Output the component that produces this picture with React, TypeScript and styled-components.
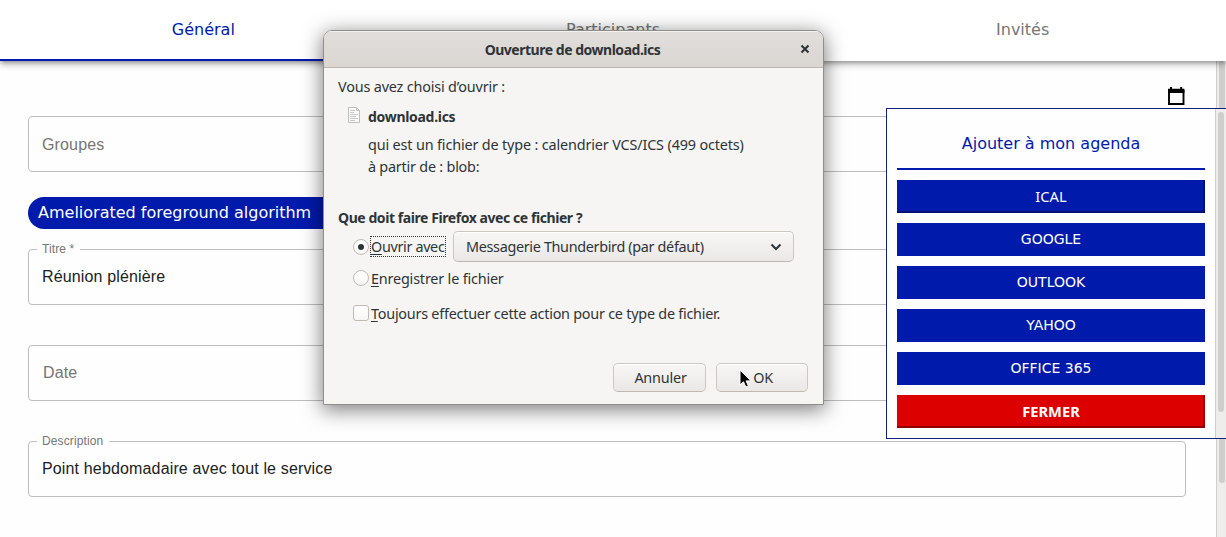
import React from "react";
import styled, { createGlobalStyle, css } from "styled-components";

const Global = createGlobalStyle`
  * { box-sizing: border-box; }
  html, body { margin: 0; padding: 0; background: #fff; overflow: hidden; }
`;

const BLUE = "#001aab";

const Page = styled.div`
  position: relative;
  width: 1226px;
  height: 537px;
  overflow: hidden;
  display: flex;
  flex-direction: column;
  background: #fefefe;
  font-family: "DejaVu Sans", sans-serif;
`;

const Tabs = styled.nav`
  position: relative;
  z-index: 1;
  flex: none;
  display: grid;
  grid-template-columns: repeat(3, 1fr);
  height: 61px;
  background: #fff;
  box-shadow: 0 2px 4px -1px rgba(0, 0, 0, 0.3), 0 4px 6px rgba(0, 0, 0, 0.16),
    0 1px 10px rgba(0, 0, 0, 0.12);
`;

const Tab = styled.div<{ $active?: boolean }>`
  display: flex;
  align-items: center;
  justify-content: center;
  padding: ${(p) => (p.$active ? "0 2px 0 0" : "0 0 2px")};
  font-size: 16px;
  color: ${(p) => (p.$active ? BLUE : "#757575")};
  border-bottom: ${(p) => (p.$active ? `2px solid ${BLUE}` : "none")};

  &:last-child {
    padding-left: 2px;
  }
`;

const Content = styled.div`
  flex: 1;
  display: flex;
  min-height: 0;
`;

const Form = styled.main`
  flex: 1;
  display: flex;
  flex-direction: column;
  align-items: stretch;
  padding: 24px 30px 0 28px;
`;

const CalendarRow = styled.div`
  display: flex;
  justify-content: flex-end;
  height: 31px;
`;

const Field = styled.div<{ $mb: number; $indent?: number; $drop?: number }>`
  position: relative;
  flex: none;
  display: flex;
  align-items: center;
  height: 56px;
  margin-bottom: ${(p) => p.$mb}px;
  padding: ${(p) => p.$drop ?? 0}px ${(p) => p.$indent ?? 13}px 0;
  border: 1px solid #bdbdbd;
  border-radius: 4px;
  font: 16px "Liberation Sans", Arial, sans-serif;
  letter-spacing: 0.15px;
  color: #212121;
`;

const Placeholder = styled.span`
  color: #757575;
`;

const Label = styled.label`
  position: absolute;
  left: 8px;
  top: -8px;
  padding: 0 6px 0 5px;
  background: #fefefe;
  color: #757575;
  font-size: 12px;
  letter-spacing: 0.11px;
  line-height: 14px;
`;

const Chip = styled.div`
  flex: none;
  align-self: flex-start;
  display: flex;
  align-items: center;
  width: 340px;
  height: 32px;
  margin-bottom: 20px;
  padding: 0 10px 1px;
  border-radius: 16px;
  background: ${BLUE};
  color: #fff;
  font-size: 16px;
`;

const PageScroll = styled.div`
  flex: none;
  width: 10px;
  padding: 0 0 54px 2px;
  background: #eeedeb;
  border-left: 1px solid #d0cfce;
`;

const ScrollThumb = styled.div<{ $h: string; $w: number }>`
  height: ${(p) => p.$h};
  width: ${(p) => p.$w}px;
  border-radius: 3px;
  background: #cecece;
`;

const Agenda = styled.aside`
  position: absolute;
  z-index: 2;
  left: 886px;
  top: 108px;
  width: 342px;
  height: 331px;
  display: flex;
  border: 1px solid #14207a;
  background: #fefefe;
`;

const AgendaBody = styled.div`
  flex: 1;
  display: flex;
  flex-direction: column;
  gap: 10px;
  padding: 10px 10px 0;
`;

const AgendaTitle = styled.h2`
  margin: 0;
  height: 51px;
  display: flex;
  align-items: center;
  justify-content: center;
  padding-bottom: 1px;
  border-bottom: 2px solid ${BLUE};
  color: ${BLUE};
  font-size: 16px;
  font-weight: 400;
`;

const AgendaButton = styled.button<{ $danger?: boolean; $raised?: boolean }>`
  height: 33px;
  padding: 0 0 2px;
  border: 0;
  border-radius: 0;
  background: ${(p) => (p.$danger ? "#dc0000" : BLUE)};
  color: #fff;
  font: 14px "DejaVu Sans", sans-serif;
  ${(p) =>
    p.$raised &&
    css`
      font-size: 14.67px;
      font-family: "Noto Sans", sans-serif;
      box-shadow: inset -2px -2px 0 ${p.$danger ? "#900000" : "#001173"};
    `}
  ${(p) =>
    p.$danger &&
    css`
      font-weight: 700;
    `}
`;

const AgendaScroll = styled.div`
  flex: none;
  width: 12px;
  padding: 3px 0 0 2px;
  border-left: 1px solid #d0cfce;
  background: #eeedeb;
`;

const Dialog = styled.section`
  position: absolute;
  z-index: 3;
  left: 323px;
  top: 30px;
  width: 501px;
  height: 375px;
  display: flex;
  flex-direction: column;
  border: 1px solid #8e8e8b;
  border-radius: 9px 9px 0 0;
  overflow: hidden;
  background: #f6f5f4;
  color: #2e3436;
  font: 14.4px "Noto Sans", sans-serif;
`;

const DialogShadow = styled.div`
  position: absolute;
  z-index: 3;
  left: 323px;
  top: 30px;
  width: 501px;
  height: 375px;
  border-radius: 9px 9px 0 0;
  box-shadow: 0 4px 20px 1px rgba(0, 0, 0, 0.5);
`;

const TitleBar = styled.header`
  flex: none;
  display: grid;
  grid-template-columns: 35px 1fr 37px;
  align-items: center;
  justify-items: center;
  height: 37px;
  border-bottom: 1px solid #bfb8b1;
  background: linear-gradient(#e1dedb, #dad6d2);
  box-shadow: inset 0 1px #f4f2f1;
`;

const DialogBody = styled.div`
  flex: 1;
  display: flex;
  flex-direction: column;
  padding: 7px 15px 12px 14px;
`;

const Line = styled.div<{ $h: number; $ml?: number; $mt?: number }>`
  flex: none;
  display: flex;
  align-items: center;
  height: ${(p) => p.$h}px;
  margin-left: ${(p) => p.$ml ?? 0}px;
  margin-top: ${(p) => p.$mt ?? 0}px;
`;

const Words = styled.span<{ $bold?: boolean; $track?: number }>`
  white-space: pre;
  font-size: ${(p) => (p.$bold ? 14 : 14.4)}px;
  font-weight: ${(p) => (p.$bold ? 700 : 400)};
  letter-spacing: ${(p) => p.$track ?? 0}px;
`;

const FileName = styled(Words)`
  margin-left: 7px;
`;

const Key = styled.span`
  text-decoration: underline;
  text-decoration-thickness: 1px;
  text-underline-offset: 2px;
`;

const Focus = styled.span`
  display: flex;
  align-items: center;
  height: 21px;
  width: 76px;
  margin: 0 7px 0 -1px;
  border: 1px dotted #2e3436;
`;

const Mark = styled.span<{ $round?: boolean }>`
  flex: none;
  display: flex;
  align-items: center;
  justify-content: center;
  width: 16px;
  height: 16px;
  margin-right: 2px;
  border: 1px solid #c0bab4;
  border-radius: ${(p) => (p.$round ? "50%" : "3px")};
  background: linear-gradient(#fff, #f7f6f5);
`;

const Dot = styled.span`
  width: 6px;
  height: 6px;
  border-radius: 50%;
  background: #2e3436;
`;

const control = css`
  display: flex;
  align-items: center;
  border: 1px solid #cdc7c2;
  border-bottom-color: #bfb8b1;
  border-radius: 5px;
  background: linear-gradient(#f8f7f6, #eae8e6);
  box-shadow: inset 0 1px #fff;
`;

const Select = styled.div`
  ${control}
  justify-content: space-between;
  width: 341px;
  height: 31px;
  padding: 0 11px 0 12px;
`;

const Actions = styled.footer`
  display: flex;
  justify-content: flex-end;
  gap: 10px;
  margin-top: auto;
`;

const Action = styled.div<{ $w: number }>`
  ${control}
  justify-content: center;
  width: ${(p) => p.$w}px;
  height: 29px;
  padding-left: 2px;
`;

const Pointer = styled.svg`
  position: absolute;
  z-index: 4;
  left: 737px;
  top: 367px;
`;

const CalendarIcon = () => (
  <svg width="20" height="22" viewBox="0 0 20 22">
    <path d="M3 6h14.500v13H3z" fill="#fff" stroke="#000" strokeWidth="1.900" />
    <path d="M2 3.800h16.400v4.200H2zM4 2h2v3H4zM14.200 2h2v3h-2z" fill="#000" />
  </svg>
);

const FileIcon = () => (
  <svg width="14" height="20" viewBox="0 0 14 20">
    <path d="M1.5 1.500h8l3 3v12h-11z" fill="#fafafa" stroke="#bfc0bd" />
    <path d="M9.5 1.500v3h3" fill="none" stroke="#bfc0bd" />
    <path d="M3 4.500h5M3 6.500h4M3 8.500h8M3 10.500h6M3 12.500h8M3 14.500h5" stroke="#c9cac8" />
  </svg>
);

export default function App() {
  return (
    <Page>
      <Global />
      <Tabs>
        <Tab $active>Général</Tab>
        <Tab>Participants</Tab>
        <Tab>Invités</Tab>
      </Tabs>
      <Content>
        <Form>
          <CalendarRow>
            <CalendarIcon />
          </CalendarRow>
          <Field $mb={25} $drop={2}>
            <Placeholder>Groupes</Placeholder>
          </Field>
          <Chip>Ameliorated foreground algorithm</Chip>
          <Field $mb={40}>
            <Label>Titre *</Label>
            Réunion plénière
          </Field>
          <Field $mb={40} $indent={14}>
            <Placeholder>Date</Placeholder>
          </Field>
          <Field $mb={0}>
            <Label>Description</Label>
            Point hebdomadaire avec tout le service
          </Field>
        </Form>
        <PageScroll>
          <ScrollThumb $h="100%" $w={6} />
        </PageScroll>
      </Content>

      <Agenda>
        <AgendaBody>
          <AgendaTitle>Ajouter à mon agenda</AgendaTitle>
          <AgendaButton $raised>ICAL</AgendaButton>
          <AgendaButton>GOOGLE</AgendaButton>
          <AgendaButton>OUTLOOK</AgendaButton>
          <AgendaButton>YAHOO</AgendaButton>
          <AgendaButton>OFFICE 365</AgendaButton>
          <AgendaButton $raised $danger>FERMER</AgendaButton>
        </AgendaBody>
        <AgendaScroll>
          <ScrollThumb $h="300px" $w={6} />
        </AgendaScroll>
      </Agenda>

      <DialogShadow />
      <Dialog>
        <TitleBar>
          <span />
          <Words $bold $track={-0.48}>Ouverture de download.ics</Words>
          <svg width="10" height="10" viewBox="0 0 10 10">
            <path d="M1.5 1.5l7 7M8.5 1.5l-7 7" stroke="#2e3436" strokeWidth="2.1" />
          </svg>
        </TitleBar>
        <DialogBody>
          <Line $h={22}><Words $track={-0.17}>Vous avez choisi d’ouvrir :</Words></Line>
          <Line $h={22} $ml={9} $mt={8}>
            <FileIcon />
            <FileName $bold $track={-0.3}>download.ics</FileName>
          </Line>
          <Line $h={22} $ml={30} $mt={6}>
            <Words $track={-0.15}>qui est un fichier de type : calendrier VCS/ICS (499 octets)</Words>
          </Line>
          <Line $h={22} $ml={30}><Words $track={-0.22}>à partir de : blob:</Words></Line>
          <Line $h={22} $mt={29}><Words $bold $track={-0.43}>Que doit faire Firefox avec ce fichier ?</Words></Line>
          <Line $h={31} $ml={15} $mt={3}>
            <Mark $round><Dot /></Mark>
            <Focus><Words $track={-0.34}><Key>O</Key>uvrir avec</Words></Focus>
            <Select>
              <Words $track={-0.33}>Messagerie Thunderbird (par défaut)</Words>
              <svg width="12" height="8" viewBox="0 0 12 8">
                <path d="M1.5 1.5L6 6l4.500-4.500" fill="none" stroke="#2e3436" strokeWidth="2" />
              </svg>
            </Select>
          </Line>
          <Line $h={22} $ml={15} $mt={5}>
            <Mark $round />
            <Words $track={-0.18}><Key>E</Key>nregistrer le fichier</Words>
          </Line>
          <Line $h={22} $ml={15} $mt={13}>
            <Mark />
            <Words $track={-0.24}><Key>T</Key>oujours effectuer cette action pour ce type de fichier.</Words>
          </Line>
          <Actions>
            <Action $w={93}><Words $track={-0.2}>Annuler</Words></Action>
            <Action $w={92}><Words $track={-0.2}>OK</Words></Action>
          </Actions>
        </DialogBody>
      </Dialog>
      <Pointer width="16" height="24" viewBox="0 0 16 24">
        <path d="M3 3v15l3.500-3.200 2.300 5.200 2.600-1.100-2.300-5h4.900z" fill="#000" stroke="#fff" strokeWidth="1" />
      </Pointer>
    </Page>
  );
}
